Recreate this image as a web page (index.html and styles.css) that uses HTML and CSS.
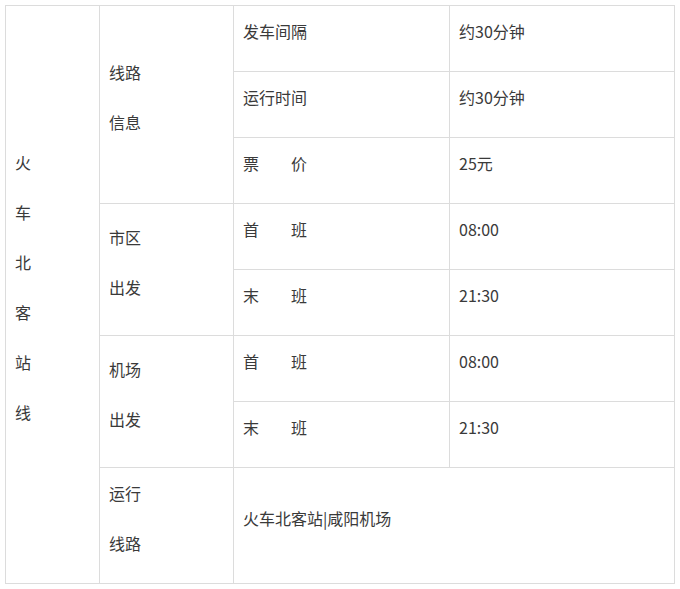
FILE: index.html
```html
<!DOCTYPE html>
<html lang="zh-CN">
<head>
<meta charset="utf-8">
<title>火车北客站线</title>
<link rel="stylesheet" href="styles.css">
</head>
<body>
<div class="schedule">
  <div class="cell route-name">
    <span>火</span><span>车</span><span>北</span><span>客</span><span>站</span><span>线</span>
  </div>
  <div class="cell group g-info"><span>线路</span><span>信息</span></div>
  <div class="cell">发车间隔</div>
  <div class="cell">约30分钟</div>
  <div class="cell">运行时间</div>
  <div class="cell">约30分钟</div>
  <div class="cell">票&emsp;&emsp;价</div>
  <div class="cell">25元</div>

  <div class="cell group g-city"><span>市区</span><span>出发</span></div>
  <div class="cell">首&emsp;&emsp;班</div>
  <div class="cell">08:00</div>
  <div class="cell">末&emsp;&emsp;班</div>
  <div class="cell">21:30</div>

  <div class="cell group g-airport"><span>机场</span><span>出发</span></div>
  <div class="cell">首&emsp;&emsp;班</div>
  <div class="cell">08:00</div>
  <div class="cell">末&emsp;&emsp;班</div>
  <div class="cell">21:30</div>

  <div class="cell group g-route"><span>运行</span><span>线路</span></div>
  <div class="cell wide">火车北客站|咸阳机场</div>
</div>
</body>
</html>
```
FILE: styles.css
```css
html, body {
  background: #ffffff;
}
body {
  margin: 5px;
  font-family: "Noto Sans CJK SC", "Noto Sans", sans-serif;
  font-size: 16px;
  color: #3a3a3a;
}
.schedule {
  display: grid;
  grid-template-columns: 94px 134px 216px 225px;
  grid-template-rows: repeat(7, 66px) 116px;
  width: max-content;
  border-left: 1px solid #dcdcdc;
  border-top: 1px solid #dcdcdc;
}
.cell {
  box-sizing: border-box;
  display: flex;
  flex-direction: column;
  justify-content: center;
  padding: 0 8px 15px 9px;
  line-height: 50px;
  border-right: 1px solid #dcdcdc;
  border-bottom: 1px solid #dcdcdc;
  white-space: nowrap;
}
.route-name {
  grid-column: 1;
  grid-row: 1 / 9;
}
.group {
  grid-column: 2;
}
.g-info { grid-row: 1 / 4; }
.g-city { grid-row: 4 / 6; }
.g-airport { grid-row: 6 / 8; }
.g-route { grid-row: 8; }
.wide {
  grid-column: 3 / 5;
}
```
